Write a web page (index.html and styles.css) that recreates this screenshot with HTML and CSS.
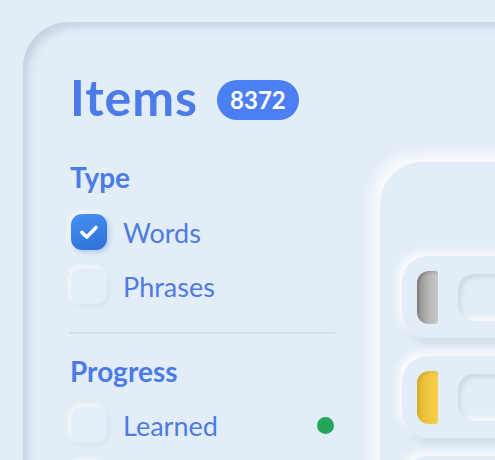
FILE: index.html
```html
<!DOCTYPE html>
<html>
<head>
<meta charset="utf-8">
<link rel="stylesheet" href="styles.css">
</head>
<body>
<div class="card">
  <aside class="filters">
    <div class="title-row">
      <h1 class="title">Items</h1>
      <span class="badge">8372</span>
    </div>
    <h2 class="section type">Type</h2>
    <div class="option first">
      <span class="box checked">
        <svg width="22" height="22" viewBox="0 0 22 22"><path d="M4 11.5 L8.8 16 L18 6.5" fill="none" stroke="#fff" stroke-width="3.6" stroke-linecap="round" stroke-linejoin="round"/></svg>
      </span>
      <span class="label">Words</span>
    </div>
    <div class="option">
      <span class="box"></span>
      <span class="label">Phrases</span>
    </div>
    <div class="divider"></div>
    <h2 class="section progress">Progress</h2>
    <div class="option first-progress">
      <span class="box"></span>
      <span class="label">Learned</span>
      <span class="dot"></span>
    </div>
    <div class="option">
      <span class="box"></span>
      <span class="label"></span>
    </div>
  </aside>
  <section class="panel">
    <div class="row"><span class="pill gray"></span><span class="well"></span></div>
    <div class="row"><span class="pill yellow"></span><span class="well"></span></div>
    <div class="row"><span class="pill gray"></span><span class="well"></span></div>
  </section>
</div>
</body>
</html>
```
FILE: styles.css
```css
html, body {
  margin: 0;
  padding: 0;
  background: #e3edf7;
  overflow: hidden;
}
body {
  width: 495px;
  height: 460px;
  font-family: Lato, "Noto Sans", sans-serif;
  color: #4b7be6;
}
.card {
  margin: 22px 0 0 23px;
  width: 620px;
  height: 620px;
  border-radius: 46px;
  background: #e3edf7;
  box-shadow: inset 5px 5px 9px rgba(170, 186, 206, 0.55), inset -5px -5px 9px rgba(255, 255, 255, 0.7);
  display: flex;
  align-items: flex-start;
  padding: 51px 0 0 47px;
  box-sizing: border-box;
  gap: 45px;
}
.filters {
  width: 265px;
  flex: none;
  display: flex;
  flex-direction: column;
}
.title-row {
  display: flex;
  align-items: flex-start;
  gap: 19px;
  height: 48px;
}
.title {
  margin: 0;
  font-size: 50px;
  font-weight: 700;
  line-height: 48px;
  color: #4b7be8;
  letter-spacing: 1px;
}
.badge {
  margin-top: 7px;
  height: 40px;
  padding: 0 13px;
  border-radius: 20px;
  background: #4c7ff3;
  color: #fff;
  font-size: 24px;
  font-weight: 700;
  line-height: 40px;
}
.section {
  margin: 0;
  font-size: 28px;
  font-weight: 700;
  line-height: 34px;
  color: #4a7be6;
}
.section.type {
  margin-top: 39px;
}
.section.progress {
  margin-top: 19px;
}
.option {
  display: flex;
  align-items: center;
  height: 36px;
  margin-top: 18px;
}
.option.first {
  margin-top: 20px;
}
.option.first-progress {
  margin-top: 19px;
}
.box {
  width: 36px;
  height: 36px;
  margin-left: 1px;
  border-radius: 11px;
  background: #e4eef8;
  box-shadow: -2px -2px 4px rgba(255, 255, 255, 0.75), 2px 2px 4px rgba(170, 186, 206, 0.22);
  flex: none;
  display: flex;
  align-items: center;
  justify-content: center;
}
.box.checked {
  background: linear-gradient(160deg, #4890f2, #2c6fd8);
  box-shadow: 2px 2px 5px rgba(60, 110, 190, 0.3), -2px -2px 5px rgba(255, 255, 255, 0.8);
}
.label {
  margin-left: 16px;
  font-size: 27px;
  font-weight: 400;
  color: #4d7be4;
  flex: 1;
}
.dot {
  width: 17px;
  height: 17px;
  border-radius: 50%;
  background: #23a55b;
  flex: none;
  margin-right: 1px;
}
.divider {
  margin-top: 28px;
  height: 2px;
  background: #d2deea;
  border-bottom: 1px solid #eef4fa;
}
.panel {
  margin-top: 89px;
  width: 300px;
  height: 420px;
  flex: none;
  border-radius: 42px;
  background: #e3edf7;
  box-shadow: -7px -7px 14px rgba(255, 255, 255, 0.85), 7px 7px 14px rgba(170, 186, 206, 0.5);
  padding: 94px 0 0 22px;
  box-sizing: border-box;
  display: flex;
  flex-direction: column;
  gap: 18px;
}
.row {
  height: 82px;
  border-radius: 26px;
  background: #e3edf7;
  box-shadow: -4px -4px 8px rgba(255, 255, 255, 0.9), 4px 4px 8px rgba(170, 186, 206, 0.45);
  display: flex;
  align-items: center;
  padding-left: 15px;
  flex: none;
}
.pill {
  width: 21px;
  height: 53px;
  border-radius: 12px 3px 3px 12px;
  flex: none;
}
.pill.gray {
  background: linear-gradient(90deg, #8f8f8f, #b8b8b8 60%, #c8c8c8);
  box-shadow: inset 2px 2px 3px rgba(0, 0, 0, 0.15);
}
.pill.yellow {
  background: linear-gradient(90deg, #e2b62e, #f2c944 60%, #f6cf4c);
  box-shadow: inset 2px 2px 3px rgba(0, 0, 0, 0.08);
}
.well {
  margin-left: 20px;
  width: 120px;
  height: 47px;
  border-radius: 16px;
  background: #e3edf7;
  box-shadow: inset 3px 3px 5px rgba(170, 186, 206, 0.4), inset -3px -3px 5px rgba(255, 255, 255, 0.9);
  flex: none;
}
```
